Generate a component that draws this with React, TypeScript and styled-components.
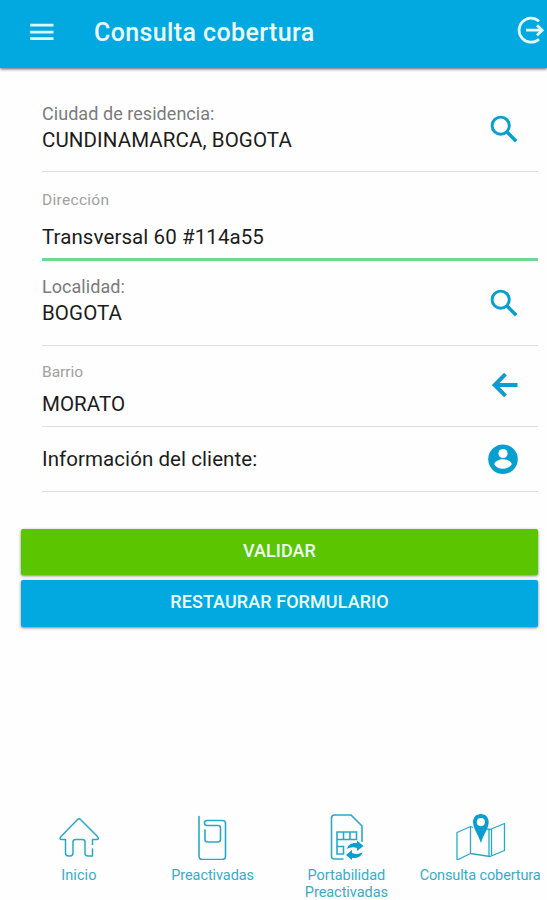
import React from 'react';
import styled, { createGlobalStyle } from 'styled-components';

const BLUE = '#02a9e1';
const ICON = '#089fd0';
const LINE = '#2ba8c8';

const GlobalStyle = createGlobalStyle`
  * { box-sizing: border-box; }
  body { margin: 0; background: #fefefe; font-family: Roboto, 'Liberation Sans', sans-serif; }
  button { font-family: inherit; border: 0; padding: 0; background: none; }
  svg { display: block; flex: none; }
`;

const Screen = styled.div`
  width: 547px;
  height: 900px;
  display: flex;
  flex-direction: column;
  overflow: hidden;
`;

const Toolbar = styled.header`
  height: 68px;
  flex: none;
  display: flex;
  align-items: flex-start;
  padding-left: 30px;
  background: ${BLUE};
  box-shadow: 0 1px 3px rgba(0, 0, 0, 0.65);
`;

const MenuButton = styled.button`
  width: 24px;
  height: 18px;
  margin-top: 23px;
`;

const Title = styled.h1`
  flex: 1;
  margin: 18px 0 0 40px;
  font-size: 25px;
  line-height: 30px;
  font-weight: 500;
  letter-spacing: 0.38px;
  color: #e9fbff;
`;

const ExitButton = styled.button`
  width: 32px;
  height: 30px;
  margin-top: 15px;
`;

const Form = styled.main`
  padding: 0 9px 0 42px;
`;

const Field = styled.div<{ $height: number; $active?: boolean }>`
  height: ${p => p.$height}px;
  display: flex;
  justify-content: space-between;
  border-bottom: ${p => (p.$active ? '3px solid #70d893' : '1px solid #dedede')};
`;

const FieldText = styled.div<{ $top: number; $gap?: number }>`
  display: flex;
  flex-direction: column;
  gap: ${p => p.$gap ?? 0}px;
  padding-top: ${p => p.$top}px;
`;

const Label = styled.span<{ $small?: boolean; $spacing: number }>`
  font-size: ${p => (p.$small ? 15.5 : 18)}px;
  line-height: 22px;
  letter-spacing: ${p => p.$spacing}px;
  color: ${p => (p.$small ? '#a0a0a0' : '#7b7b7b')};
`;

const Value = styled.span<{ $spacing: number }>`
  font-size: 20.5px;
  line-height: 26px;
  letter-spacing: ${p => p.$spacing}px;
  color: #1c1c1c;
`;

const FieldAction = styled.button<{ $top: number }>`
  width: 32px;
  height: 32px;
  margin: ${p => p.$top}px 18px 0 0;
`;

const Actions = styled.div`
  display: flex;
  flex-direction: column;
  gap: 5px;
  padding: 36.5px 9px 0 21px;
`;

const ActionButton = styled.button<{ $color: string; $spacing: number }>`
  height: 46.5px;
  padding-bottom: 3px;
  border-radius: 2px;
  background: ${p => p.$color};
  box-shadow: 0 1px 3px rgba(0, 0, 0, 0.5);
  color: #edfff5;
  font-size: 18px;
  font-weight: 500;
  letter-spacing: ${p => p.$spacing}px;
`;

const TabBar = styled.nav`
  margin-top: auto;
  height: 92px;
  flex: none;
  padding-left: 12px;
  display: grid;
  grid-template-columns: repeat(4, 1fr);
`;

const Tab = styled.a`
  display: flex;
  flex-direction: column;
  align-items: center;
`;

const TabLabel = styled.span<{ $spacing: number }>`
  margin-top: 8px;
  font-size: 14.5px;
  line-height: 16.5px;
  letter-spacing: ${p => p.$spacing}px;
  text-align: center;
  white-space: pre-line;
  color: #38abc9;
`;

const SearchIcon = () => (
  <svg width="32" height="32" viewBox="0 0 32 32" fill="none" stroke={ICON}>
    <circle cx="12.7" cy="12.7" r="8.6" strokeWidth="2.9" />
    <path d="M19 19 28.2 28.2" strokeWidth="3.5" />
  </svg>
);

const BackIcon = () => (
  <svg width="32" height="32" viewBox="0 0 32 32" fill="none" stroke={ICON} strokeWidth="4">
    <path d="M29.500 16H8M17.500 5.200 6.700 16 17.500 26.800" />
  </svg>
);

const PersonIcon = () => (
  <svg width="32" height="32" viewBox="0 0 32 32" fill="#fff">
    <circle cx="15" cy="16.200" r="14.800" fill={ICON} />
    <circle cx="15" cy="10.500" r="4.600" />
    <path d="M6.200 21.200c.4-3 5.600-5 8.800-5s8.400 2 8.800 5c-1.900 2.900-5 4.600-8.800 4.600s-6.900-1.700-8.800-4.600Z" />
  </svg>
);

const HomeIcon = () => (
  <svg width="52" height="52" viewBox="0 0 52 52" fill="none" stroke={LINE} strokeWidth="1.5" strokeLinejoin="round" strokeLinecap="round">
    <path d="M39.500 36.500V31.500M39.500 41V43.500V48H35Q32 48 32 45V34Q32 31.500 29.500 31.500H22.500Q20 31.500 20 34V45Q20 48 17 48H15.500Q12.500 48 12.500 45V31.500H9Q5.500 31.500 8 28.500L24.500 11.500Q26 10 27.500 11.500L44 28Q47 31.500 43.500 31.500H39.500" />
  </svg>
);

const PhoneIcon = () => (
  <svg width="52" height="52" viewBox="0 0 52 52" fill="none" stroke={LINE} strokeWidth="1.6" strokeLinejoin="round" strokeLinecap="round">
    <path d="M12 8.500V48Q12 51.500 15.500 51.500H35Q38.500 51.500 38.500 48V15.500Q38.500 12.500 35.500 12.500H20Q17.500 12.500 17.500 15T20 17.500H31Q33.500 17.500 33.500 20V31.500Q33.500 34 31 34H20.500Q18 34 18 31.500V22" />
  </svg>
);

const SimIcon = () => (
  <svg width="52" height="52" viewBox="0 0 52 52" fill="none" stroke={LINE} strokeWidth="1.6">
    <path d="M23.500 51H14Q11.500 51 11.500 48V10Q11.500 7 14.500 7H31L42 18V34" />
    <path d="M17 24H36.500V31.500H17ZM23.500 24V31.500M30 24V31.500M17 31.500V46H23.500V38.500H17" />
    <g fill={ICON} stroke="none">
      <path d="M27 41C28 36.500 32 34.500 37 35V32.500L43.500 38 37 43V40C33 38.500 30 39.500 27 41Z" />
      <path d="M42.500 44.500C41 49 37 50.500 32 50V52L26 47 32 42V45C36 46.500 39 46 42.500 44.500Z" />
    </g>
  </svg>
);

const MapIcon = () => (
  <svg width="52" height="52" viewBox="0 0 52 52" fill="none" stroke={LINE} strokeWidth="1.300" strokeLinejoin="round">
    <path d="M19 19.500 16.500 18.500 3 24.500V52L16.500 45.500 36 48.500 50.500 42.500V15.500L36 21.500 31.500 20.500M16.500 18.500V45.500M35 22V48M37.500 21.500V48" />
    <path fill={ICON} stroke="none" fillRule="evenodd" d="M26.900 6C22.200 6 19 9.600 19 14C19 20 24 26 26.900 35C29.800 26 34.700 20 34.700 14C34.700 9.600 31.500 6 26.900 6ZM26.900 10A4.100 4.100 0 1 1 26.900 18.200A4.100 4.100 0 1 1 26.900 10Z" />
  </svg>
);

const tabs = [
  { label: 'Inicio', icon: <HomeIcon />, spacing: 0.1 },
  { label: 'Preactivadas', icon: <PhoneIcon />, spacing: -0.08 },
  { label: 'Portabilidad\nPreactivadas', icon: <SimIcon />, spacing: -0.05 },
  { label: 'Consulta cobertura', icon: <MapIcon />, spacing: -0.12 },
];

export default function App() {
  return (
    <Screen>
      <GlobalStyle />
      <Toolbar>
        <MenuButton aria-label="Menú">
          <svg width="24" height="18" viewBox="0 0 24 18" fill="#dff8ff">
            <path d="M0 .8H23.500V3.600H0ZM0 7.700H23.500V10.500H0ZM0 14.300H23.500V17.100H0Z" />
          </svg>
        </MenuButton>
        <Title>Consulta cobertura</Title>
        <ExitButton aria-label="Salir">
          <svg width="32" height="30" viewBox="0 0 32 30" fill="none" stroke="#e6fbff" strokeWidth="2.700">
            <path d="M24 6.200A12 12 0 1 0 24 24.200M11 15.200H26.500M22 10.200 27.200 15.200 22 20.200" />
          </svg>
        </ExitButton>
      </Toolbar>

      <Form>
        <Field $height={104}>
          <FieldText $top={35} $gap={2}>
            <Label $spacing={0.05}>Ciudad de residencia:</Label>
            <Value $spacing={0.1}>CUNDINAMARCA, BOGOTA</Value>
          </FieldText>
          <FieldAction $top={45} aria-label="Buscar ciudad"><SearchIcon /></FieldAction>
        </Field>
        <Field $height={89} $active>
          <FieldText $top={17} $gap={13}>
            <Label $small $spacing={0.3}>Dirección</Label>
            <Value $spacing={0.09}>Transversal 60 #114a55</Value>
          </FieldText>
        </Field>
        <Field $height={85}>
          <FieldText $top={15} $gap={2}>
            <Label $spacing={0.05}>Localidad:</Label>
            <Value $spacing={0.1}>BOGOTA</Value>
          </FieldText>
          <FieldAction $top={26} aria-label="Buscar localidad"><SearchIcon /></FieldAction>
        </Field>
        <Field $height={81}>
          <FieldText $top={15} $gap={8}>
            <Label $small $spacing={0}>Barrio</Label>
            <Value $spacing={0.05}>MORATO</Value>
          </FieldText>
          <FieldAction $top={23} aria-label="Volver"><BackIcon /></FieldAction>
        </Field>
        <Field $height={65}>
          <FieldText $top={19}>
            <Value $spacing={0.07}>Información del cliente:</Value>
          </FieldText>
          <FieldAction $top={16} aria-label="Cliente"><PersonIcon /></FieldAction>
        </Field>
      </Form>

      <Actions>
        <ActionButton $color="#5bc500" $spacing={0.05}>VALIDAR</ActionButton>
        <ActionButton $color={BLUE} $spacing={0.07}>RESTAURAR FORMULARIO</ActionButton>
      </Actions>

      <TabBar>
        {tabs.map(tab => (
          <Tab key={tab.label}>
            {tab.icon}
            <TabLabel $spacing={tab.spacing}>{tab.label}</TabLabel>
          </Tab>
        ))}
      </TabBar>
    </Screen>
  );
}
